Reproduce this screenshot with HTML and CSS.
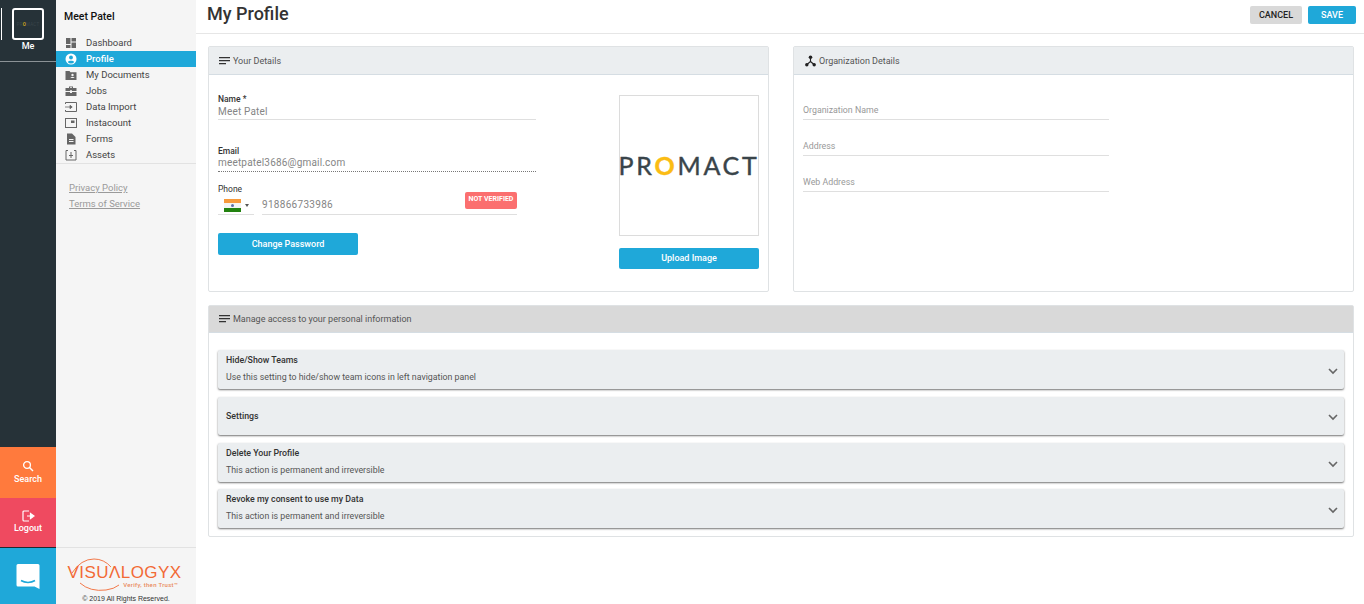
FILE: index.html
```html
<!DOCTYPE html>
<html lang="en">
<head>
<meta charset="utf-8">
<title>My Profile</title>
<link rel="stylesheet" href="styles.css">
</head>
<body>
<div class="app">
  <aside class="rail">
    <div class="rail-me">
      <div class="rail-avatar"><span class="mini-logo">PR<b>O</b>MACT</span></div>
      <div class="rail-label">Me</div>
    </div>
    <div class="rail-spacer"></div>
    <div class="rail-btn search">
      <svg width="12" height="12" viewBox="0 0 12 12"><circle cx="5" cy="5" r="3.4" fill="none" stroke="#fff" stroke-width="1.3"/><path d="M7.5 7.5L11 11" stroke="#fff" stroke-width="1.4"/></svg>
      <span>Search</span>
    </div>
    <div class="rail-btn logout">
      <svg width="13" height="12" viewBox="0 0 13 12"><path d="M7 1H2a1 1 0 0 0-1 1v8a1 1 0 0 0 1 1h5" fill="none" stroke="#fff" stroke-width="1.2"/><path d="M5 6h5M8.500 3.500L12 6 8.500 8.500z" stroke="#fff" fill="#fff" stroke-width="1.2"/></svg>
      <span>Logout</span>
    </div>
    <div class="rail-chat">
      <svg width="24" height="27" viewBox="0 0 24 27"><path d="M2 1h20a1.500 1.500 0 0 1 1.500 1.500V26l-5-2.500H2A1.500 1.500 0 0 1 .5 22V2.500A1.500 1.500 0 0 1 2 1z" fill="#fff"/><path d="M5 17.500c4 2.500 10 2.500 14 0" fill="none" stroke="#1fa8d9" stroke-width="1.500"/></svg>
    </div>
  </aside>

  <nav class="side">
    <div class="side-name">Meet Patel</div>
    <ul class="side-nav">
      <li><svg viewBox="0 0 12 12"><path d="M1 1h4.500v6H1zM6.500 1H11v3.500H6.500zM6.500 5.500H11V11H6.500zM1 8h4.500v3H1z" fill="#666"/></svg>Dashboard</li>
      <li class="active"><svg viewBox="0 0 12 12"><circle cx="6" cy="6" r="5.500" fill="#fff"/><circle cx="6" cy="4.500" r="1.900" fill="#1fa8d9"/><path d="M2.700 9c1-1.700 5.600-1.700 6.600 0a4.300 4.300 0 0 1-6.600 0z" fill="#1fa8d9"/></svg>Profile</li>
      <li><svg viewBox="0 0 12 12"><path d="M.5 2h4l1 1.200h6V11H.5z" fill="#666"/><circle cx="7.500" cy="6" r="1.200" fill="#f5f5f5"/><path d="M5.500 9c.3-1.400 3.700-1.400 4 0z" fill="#f5f5f5"/></svg>My Documents</li>
      <li><svg viewBox="0 0 12 12"><path d="M4 3V1.500h4V3h3.500v3H7v-.8H5V6H.5V3zM5 3h2v-.7H5zM.5 7H5v1h2V7h4.500v4H.5z" fill="#666" fill-rule="evenodd"/></svg>Jobs</li>
      <li><svg viewBox="0 0 12 12"><path d="M.5 3V1.500h11v9H.5V9" fill="none" stroke="#666"/><path d="M0 6h6.500M5 4.300L7.200 6 5 7.700z" stroke="#666" fill="#666" stroke-width=".8"/></svg>Data Import</li>
      <li><svg viewBox="0 0 12 12"><rect x=".5" y="1.500" width="11" height="9" fill="none" stroke="#666"/><rect x="6" y="3.500" width="3.500" height="2.500" fill="#666"/></svg>Instacount</li>
      <li><svg viewBox="0 0 12 12"><path d="M2 .5h5l3.500 3.500v7.500H2z" fill="#666"/><path d="M4 6.500h4.500M4 8.500h4.500" stroke="#f5f5f5"/></svg>Forms</li>
      <li><svg viewBox="0 0 12 12"><path d="M3 1.500H1v9.500h10V1.500H9" fill="none" stroke="#666"/><path d="M6 3v6M4 6.500h4" stroke="#666"/></svg>Assets</li>
    </ul>
    <div class="side-links">
      <a>Privacy Policy</a>
      <a>Terms of Service</a>
    </div>
    <div class="side-spacer"></div>
    <div class="side-foot">
      <svg class="vis-arcs" width="140" height="57" viewBox="0 0 140 57"><path d="M16 25Q25 11 38 11Q48 11 55 19M24 35Q34 44 50 42Q58 41 63 37" fill="none" stroke="#f26a35" stroke-width=".9"/></svg>
      <div class="vis-word">VISUΛLOGYX</div>
      <div class="vis-tag">Verify, then Trust™</div>
      <div class="copy">© 2019 All Rights Reserved.</div>
    </div>
  </nav>

  <main class="main">
    <header class="top">
      <h1>My Profile</h1>
      <div class="top-actions">
        <button class="btn-cancel">CANCEL</button>
        <button class="btn-save">SAVE</button>
      </div>
    </header>

    <div class="cards">
      <section class="card">
        <div class="card-head">
          <svg width="12" height="8" viewBox="0 0 12 8"><path d="M0 .7h11M0 3.700h11M0 6.700h7" stroke="#333" stroke-width="1.200"/></svg>
          <span>Your Details</span>
        </div>
        <div class="details">
          <div class="details-form">
            <div class="field f-name">
              <label>Name *</label>
              <div class="value">Meet Patel</div>
            </div>
            <div class="field f-email">
              <label>Email</label>
              <div class="value dotted">meetpatel3686@gmail.com</div>
            </div>
            <div class="f-phone">
              <label class="phone-label">Phone</label>
              <div class="phone-row">
                <div class="flag-box">
                  <span class="flag"><i class="saffron"></i><i class="white"></i><i class="green"></i></span>
                  <span class="caret"></span>
                </div>
                <div class="phone-num">918866733986<span class="badge">NOT VERIFIED</span></div>
              </div>
            </div>
            <button class="btn-blue btn-pass">Change Password</button>
          </div>
          <div class="details-image">
            <div class="logo-box"><span class="promact">PR<b>O</b>MACT</span></div>
            <button class="btn-blue btn-upload">Upload Image</button>
          </div>
        </div>
      </section>

      <section class="card">
        <div class="card-head org-head">
          <svg width="11" height="12" viewBox="0 0 11 12"><circle cx="5.500" cy="2.300" r="1.800" fill="#222"/><circle cx="1.800" cy="9.800" r="1.700" fill="#222"/><circle cx="9.200" cy="9.800" r="1.700" fill="#222"/><path d="M5.500 3v3.500L2 9.500M5.500 6.500l3.500 3" fill="none" stroke="#222" stroke-width="1.100"/></svg>
          <span>Organization Details</span>
        </div>
        <div class="org">
          <div class="org-field">Organization Name</div>
          <div class="org-field">Address</div>
          <div class="org-field">Web Address</div>
        </div>
      </section>
    </div>

    <section class="card manage">
      <div class="card-head grey">
        <svg width="12" height="8" viewBox="0 0 12 8"><path d="M0 .7h11M0 3.700h11M0 6.700h7" stroke="#333" stroke-width="1.200"/></svg>
        <span>Manage access to your personal information</span>
      </div>
      <div class="acc-list">
        <div class="acc acc-a">
          <div class="acc-text"><div class="acc-title">Hide/Show Teams</div><div class="acc-sub">Use this setting to hide/show team icons in left navigation panel</div></div>
          <svg class="chev" width="10" height="7" viewBox="0 0 10 7"><path d="M1 1l4 4 4-4" fill="none" stroke="#666" stroke-width="1.600"/></svg>
        </div>
        <div class="acc acc-b">
          <div class="acc-text"><div class="acc-title">Settings</div></div>
          <svg class="chev" width="10" height="7" viewBox="0 0 10 7"><path d="M1 1l4 4 4-4" fill="none" stroke="#666" stroke-width="1.600"/></svg>
        </div>
        <div class="acc acc-a">
          <div class="acc-text"><div class="acc-title">Delete Your Profile</div><div class="acc-sub">This action is permanent and irreversible</div></div>
          <svg class="chev" width="10" height="7" viewBox="0 0 10 7"><path d="M1 1l4 4 4-4" fill="none" stroke="#666" stroke-width="1.600"/></svg>
        </div>
        <div class="acc acc-a">
          <div class="acc-text"><div class="acc-title">Revoke my consent to use my Data</div><div class="acc-sub">This action is permanent and irreversible</div></div>
          <svg class="chev" width="10" height="7" viewBox="0 0 10 7"><path d="M1 1l4 4 4-4" fill="none" stroke="#666" stroke-width="1.600"/></svg>
        </div>
      </div>
    </section>
  </main>
</div>
</body>
</html>
```

FILE: styles.css
```css
* { box-sizing: border-box; }
html, body { margin: 0; height: 100%; overflow: hidden; }
body { font-family: Roboto, "Liberation Sans", sans-serif; font-size: 10px; color: #333; background: #fff; }
.app { display: flex; height: 604px; }

/* Rail */
.rail { width: 56px; background: #263238; display: flex; flex-direction: column; color: #fff; flex: none; }
.rail-me { height: 62px; border-bottom: 1px solid #8b9296; padding-top: 8px; position: relative; display: flex; flex-direction: column; align-items: center; }
.rail-me::before { content: ""; position: absolute; left: 1px; top: 8px; width: 1px; height: 32px; background: #fff; }
.rail-avatar { width: 32px; height: 32px; border: 2px solid #fff; border-radius: 3px; display: flex; align-items: center; justify-content: center; overflow: hidden; }
.mini-logo { font-size: 4.500px; letter-spacing: .2px; color: #39444a; white-space: nowrap; }
.mini-logo b { color: #c9a21c; }
.rail-label { font-size: 9px; font-weight: 500; line-height: 11px; margin-top: 1px; }
.rail-spacer { flex: 1; }
.rail-btn { display: flex; flex-direction: column; align-items: center; font-size: 9px; font-weight: 500; }
.rail-btn span { line-height: 11px; margin-top: 1px; }
.rail-btn.search { height: 51px; background: #ff7a3d; padding-top: 13px; }
.rail-btn.search span { margin-top: 2px; }
.rail-btn.logout { height: 50px; background: #ef4a60; padding-top: 12px; border-bottom: 1px solid #1c2a33; }
.rail-chat { height: 56px; background: #1fa8d9; display: flex; align-items: center; justify-content: center; }

/* Sidebar */
.side { width: 140px; background: #f5f5f5; display: flex; flex-direction: column; flex: none; }
.side-name { font-size: 10.500px; font-weight: 500; color: #111; padding: 10px 0 0 8px; line-height: 13px; height: 35px; }
.side-nav { list-style: none; margin: 0; padding: 0; border-bottom: 1px solid #e2e2e2; }
.side-nav li { height: 16px; display: flex; align-items: center; padding: 0 0 1px 9px; font-size: 9.500px; color: #444; }
.side-nav li svg { width: 12px; height: 12px; margin-right: 9px; flex: none; }
.side-nav li.active { background: #1fa8d9; color: #fff; font-weight: 500; }
.side-links { padding: 16px 0 0 13px; display: flex; flex-direction: column; }
.side-links a { font-size: 9.500px; line-height: 16px; color: #9a9a9a; text-decoration: underline; }
.side-spacer { flex: 1; }
.side-foot { position: relative; height: 57px; border-top: 1px solid #e2e2e2; padding-top: 17px; overflow: hidden; text-align: center; }
.vis-arcs { position: absolute; left: 0; top: 0; }
.vis-word { font-family: "Liberation Sans", sans-serif; font-size: 17px; line-height: 15px; color: #f26a35; letter-spacing: .45px; white-space: nowrap; padding-right: 3px; }
.vis-tag { font-size: 6px; font-weight: 500; line-height: 6px; color: #e98a5c; text-align: right; padding-right: 18px; letter-spacing: .3px; margin-top: 2px; }
.copy { font-family: "Liberation Sans", sans-serif; font-size: 7px; line-height: 9px; color: #333; margin-top: 6px; }

/* Main */
.main { flex: 1; min-width: 0; background: #fff; padding: 0 10px 0 12px; }
.top { height: 34px; margin: 0 -10px 12px -12px; padding: 0 8px 0 11px; border-bottom: 1px solid #e6e6e6; display: flex; justify-content: space-between; }
.top h1 { margin: 0; font-size: 18px; font-weight: 500; line-height: 28px; color: #333; }
.top-actions { display: flex; gap: 6px; padding-top: 6px; }
.top-actions button { height: 18px; border: 0; border-radius: 2px; font: 500 9px Roboto, sans-serif; padding: 0; }
.btn-cancel { width: 52px; background: #d9d9d9; color: #222; }
.btn-save { width: 48px; background: #1fa8d9; color: #fff; }

.cards { display: flex; gap: 24px; }
.card { flex: 1; height: 246px; border: 1px solid #dfe2e4; border-radius: 2px; background: #fff; }
.card-head { height: 28px; background: #ebeef0; border-bottom: 1px solid #d5dde3; display: flex; align-items: center; padding-left: 10px; font-size: 9px; color: #555; gap: 2px; }
.card-head svg { flex: none; }
.org-head { padding-left: 11px; gap: 3px; }

.details { display: flex; height: 217px; padding-left: 9px; }
.details-form { width: 318px; }
.field label, .phone-label { display: block; font-size: 8.500px; font-weight: 500; line-height: 10px; color: #333; }
.phone-label { font-weight: 400; }
.value { font-size: 10px; letter-spacing: .18px; color: #858585; line-height: 15px; height: 16px; border-bottom: 1px solid #dfdfdf; }
.value.dotted { border-bottom: 1px dotted #777; line-height: 14px; }
.f-name { padding-top: 19px; }
.f-email { padding-top: 26px; }
.f-phone { padding-top: 12px; }
.phone-row { display: flex; gap: 8px; margin-top: 4px; }
.flag-box { width: 36px; height: 17px; border-bottom: 1px solid #dfdfdf; display: flex; align-items: flex-start; padding: 1px 0 0 6px; gap: 4px; }
.flag { position: relative; width: 17px; height: 13px; display: flex; flex-direction: column; }
.flag i { flex: 1; display: block; }
.flag::after { content: ""; position: absolute; left: 7px; top: 5px; width: 3px; height: 3px; border-radius: 50%; background: #5d6fa8; }
.saffron { background: #f79a3c; }
.white { background: #f4f4f4; }
.green { background: #22820f; }
.caret { width: 0; height: 0; margin-top: 5px; border-left: 2.500px solid transparent; border-right: 2.500px solid transparent; border-top: 3px solid #555; }
.phone-num { position: relative; width: 255px; height: 17px; border-bottom: 1px solid #dfdfdf; font-size: 10px; letter-spacing: .3px; line-height: 13px; color: #858585; }
.badge { position: absolute; left: 203px; top: -6px; width: 52px; height: 17px; background: #fb6f6f; border-radius: 2px; color: #fff; font-size: 7px; font-weight: 700; letter-spacing: 0; text-align: center; line-height: 15px; }
.btn-blue { display: block; border: 0; border-radius: 2px; background: #1fa8d9; color: #fff; font: 500 9px Roboto, sans-serif; padding: 0; }
.btn-pass { width: 140px; height: 22px; margin-top: 18px; }
.details-image { width: 140px; margin-left: 83px; padding-top: 20px; }
.logo-box { width: 140px; height: 141px; border: 1px solid #dcdcdc; display: flex; align-items: center; justify-content: center; overflow: hidden; }
.promact { font-family: Lato, "Liberation Sans", sans-serif; font-size: 25px; font-weight: 400; -webkit-text-stroke: .4px #39444a; letter-spacing: 2.700px; color: #39444a; white-space: nowrap; margin-bottom: 2px; }
.promact b { color: #fbbc14; font-weight: 700; -webkit-text-stroke: .4px #fbbc14; }
.btn-upload { width: 140px; height: 21px; margin-top: 12px; line-height: 19px; }

.org { padding: 21px 0 0 9px; }
.org-field { width: 306px; height: 24px; margin-bottom: 12px; border-bottom: 1px solid #dfdfdf; font-size: 8.800px; line-height: 20px; color: #999; padding-top: 4px; }

.manage { height: 232px; margin-top: 13px; }
.card-head.grey { height: 27px; background: #d9d9d9; }
.acc-list { padding: 17px 9px 0 9px; }
.acc { display: flex; align-items: center; justify-content: space-between; background: #ebeef0; border-radius: 2px; box-shadow: 0 1px 2px rgba(0,0,0,.55); padding: 0 6px 0 8px; margin-bottom: 8px; }
.acc-a { height: 39px; }
.acc-b { height: 38px; }
.acc + .acc-a:last-child { margin-top: -1px; }
.acc-a .acc-text { margin-top: -2px; }
.acc-title { font-size: 8.800px; font-weight: 500; line-height: 11px; color: #333; }
.acc-sub { font-size: 8.800px; line-height: 11px; color: #555; margin-top: 6px; }
.chev { flex: none; margin-top: 3px; }
```
